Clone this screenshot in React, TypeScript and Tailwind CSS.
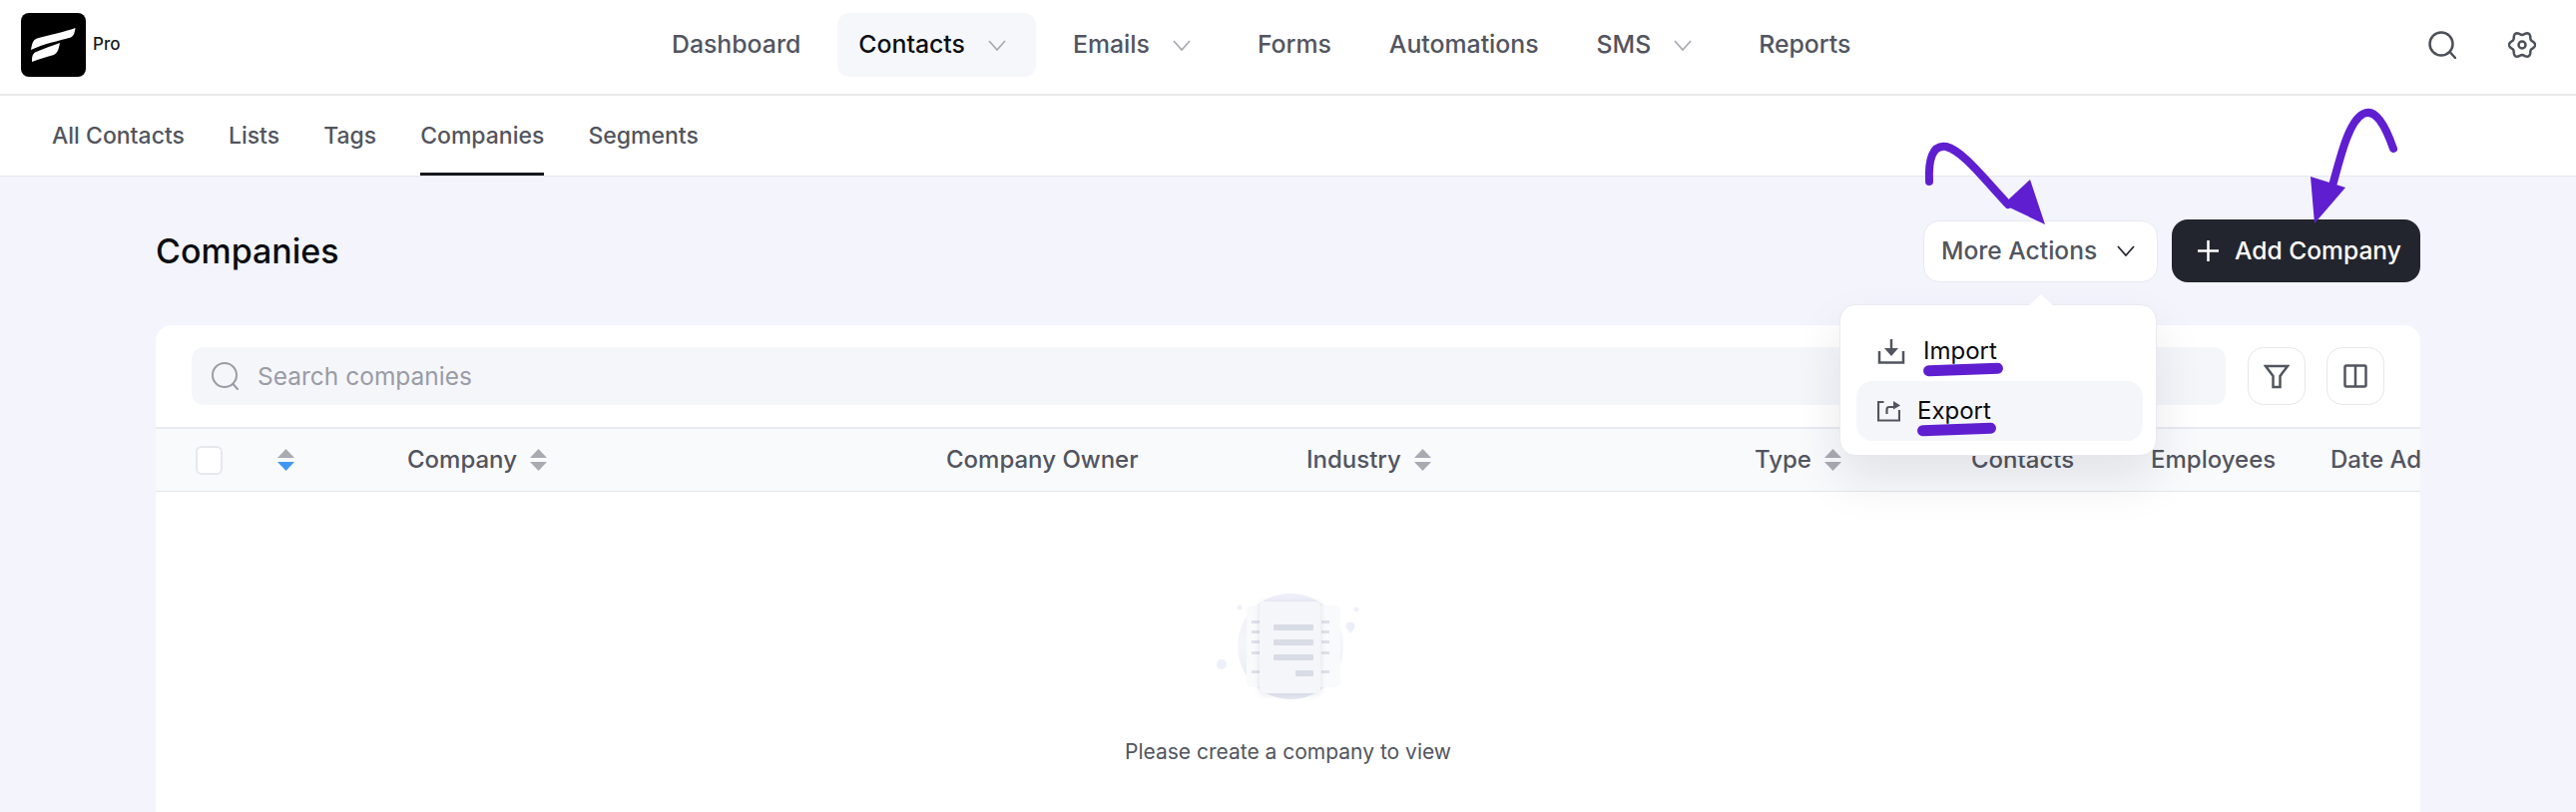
const font = { fontFamily: 'Inter, "Liberation Sans", sans-serif' };

// wavy six-lobed outline of the settings icon
const gearPath =
  Array.from({ length: 72 }, (_, i) => {
    const a = (i * 5 * Math.PI) / 180;
    const r = 11.6 + 1.5 * Math.cos(6 * a);
    return `${i === 0 ? 'M' : 'L'}${(14 + r * Math.cos(a)).toFixed(2)} ${(14 + r * Math.sin(a)).toFixed(2)}`;
  }).join('') + 'Z';

function Chevron({ className = '' }: { className?: string }) {
  return (
    <svg width="18" height="11" viewBox="0 0 18 11" fill="none" stroke="currentColor" strokeWidth="1.75" className={`shrink-0 ${className}`}>
      <path d="M1 1L9 10L17 1" />
    </svg>
  );
}

function SortArrows({ active = false }: { active?: boolean }) {
  return (
    <svg width="19" height="22" viewBox="0 0 19 22" className="shrink-0">
      <path d="M9.5 0L18 9H1Z" fill="#a9abb2" />
      <path d="M1 13H18L9.5 22Z" fill={active ? '#3f97f2' : '#a9abb2'} />
    </svg>
  );
}

function Logo() {
  return (
    <svg width="65" height="64" viewBox="0 0 65 64" className="shrink-0">
      <rect width="65" height="64" rx="8" fill="#000" />
      <path d="M10 37C11 31 12 27 16 25.5C28 22 44 19 54.5 15C54 19 53 23 50 24.500C38 28 22 31 10 37Z" fill="#fff" />
      <path d="M11 49C11 45 11 42 14 39.500C22 36 31 33 39 30C38 35 37 40 33 42C26 44 18 46 11 49Z" fill="#fff" />
    </svg>
  );
}

function NavItem({ label, active = false, menu = false }: { label: string; active?: boolean; menu?: boolean }) {
  return (
    <div
      className={`flex h-[64px] items-center pl-[21px] ${menu ? 'pr-[30px]' : 'pr-[21px]'} rounded-xl ${
        active ? 'bg-[#f6f7fb] text-[#0d0f14]' : 'text-[#52555f]'
      }`}
    >
      <span className="text-[24.8px] font-medium">{label}</span>
      {menu && <Chevron className="ml-[23px] text-[#a9abb2]" />}
    </div>
  );
}

function HeaderCell({ label, width, sort = false }: { label: string; width: string; sort?: boolean }) {
  return (
    <div className={`flex shrink-0 items-center gap-[12px] whitespace-nowrap ${width}`}>
      <span>{label}</span>
      {sort && <SortArrows />}
    </div>
  );
}

function Arrows() {
  return (
    <>
      <svg width="140" height="100" viewBox="0 0 140 100" className="absolute left-[1920px] top-[-42px] z-20" fill="none">
        <path d="M13 47C12 25 16 10 30 12C46 16 66 42 92 70" stroke="#5f1fd1" strokeWidth="8" strokeLinecap="round" />
        <path d="M129 90L114 45L87 70Z" fill="#5f1fd1" />
      </svg>
      <svg width="110" height="130" viewBox="0 0 110 130" className="absolute left-[2300px] top-[-75px] z-20" fill="none">
        <path d="M98 47C90 24 80 6 68 12C52 20 44 60 34 95" stroke="#5f1fd1" strokeWidth="8" strokeLinecap="round" />
        <path d="M19 122L15 75L50 86Z" fill="#5f1fd1" />
      </svg>
    </>
  );
}

function ActionsMenu() {
  return (
    <div className="absolute left-[1843px] top-[128px] z-10 h-[152px] w-[318px] rounded-2xl border border-[#e9eaef] bg-white pl-[16px] pt-[16px] shadow-[0_24px_48px_rgba(30,34,60,0.10)]">
      <div className="absolute left-[189px] top-[-11px] h-0 w-0 border-x-[12px] border-b-[11px] border-x-transparent border-b-white" />
      <div className="flex h-[60px] w-[287px] items-center pl-[21px] text-[24px] text-[#0b0c10]">
        <svg width="28" height="25" viewBox="0 0 28 25" fill="none" stroke="#52555f" strokeWidth="2.5" className="shrink-0">
          <path d="M2 12V23.500H26V12" />
          <path d="M14 0V10" />
          <path d="M7 9H21L14 17Z" fill="#52555f" stroke="none" />
        </svg>
        <div className="relative ml-[18px]">
          Import
          <div className="absolute left-0 top-[31px] h-[11px] w-[80px] -rotate-2 rounded-full bg-[#5f1fd1]" />
        </div>
      </div>
      <div className="flex h-[60px] w-[287px] items-center rounded-2xl bg-[#f5f6f9] pl-[21px] text-[24px] text-[#0b0c10]">
        <svg width="23" height="21" viewBox="0 0 23 21" fill="none" stroke="#52555f" strokeWidth="2.2" className="shrink-0">
          <path d="M6.500 1H1V19.500H22V9" />
          <path d="M9.500 13V8.500Q9.500 6 12 6H17" />
          <path d="M16 0L23 4.500L16 8.500Z" fill="#52555f" stroke="none" />
        </svg>
        <div className="relative ml-[17px]">
          Export
          <div className="absolute left-0 top-[31px] h-[11px] w-[79px] -rotate-2 rounded-full bg-[#5f1fd1]" />
        </div>
      </div>
    </div>
  );
}

function EmptyArt() {
  return (
    <svg width="160" height="120" viewBox="0 0 160 120">
      <defs>
        <linearGradient id="disc" x1="0" y1="0" x2="0" y2="1">
          <stop offset="0" stopColor="#eeeefa" />
          <stop offset="0.5" stopColor="#f5f6fa" />
          <stop offset="1" stopColor="#e4e7f1" />
        </linearGradient>
      </defs>
      <circle cx="82" cy="56" r="53" fill="url(#disc)" />
      <circle cx="13" cy="74" r="5" fill="#eef0f9" />
      <path d="M138 38a4.500 4.500 0 1 1 8 0l-4 5Z" fill="#eceef9" />
      <circle cx="31" cy="17" r="2.500" fill="#f0f1f7" />
      <circle cx="148" cy="19" r="2.500" fill="#f0f1f7" />
      <rect x="38" y="15" width="94" height="82" rx="5" fill="#f9fafc" />
      <g fill="#dde0e8">
        <rect x="43" y="30" width="8" height="3" />
        <rect x="43" y="40" width="8" height="3" />
        <rect x="43" y="50" width="8" height="3" />
        <rect x="43" y="61" width="8" height="3" />
        <rect x="43" y="80" width="8" height="3" />
        <rect x="113" y="30" width="8" height="3" />
        <rect x="113" y="40" width="8" height="3" />
        <rect x="113" y="50" width="8" height="3" />
        <rect x="113" y="61" width="8" height="3" />
        <rect x="113" y="80" width="8" height="3" />
      </g>
      <rect x="51" y="11" width="61" height="92" rx="4" fill="#f4f6fa" className="drop-shadow-[0_1px_3px_rgba(40,50,90,0.12)]" />
      <g fill="#d8dce5">
        <rect x="65" y="34" width="40" height="6" rx="1" />
        <rect x="65" y="49" width="40" height="6" rx="1" />
        <rect x="65" y="64" width="40" height="6" rx="1" />
        <rect x="87" y="80" width="18" height="6" rx="1" />
      </g>
    </svg>
  );
}

export default function App() {
  return (
    <div className="flex h-[814px] w-[2581px] flex-col overflow-hidden bg-[#f3f4fc]" style={font}>
      <header className="flex h-[96px] shrink-0 items-center border-b-2 border-[#e9e9ec] bg-white pb-[4px] pl-[21px] pr-[40px]">
        <div className="flex w-[631px] items-center gap-[7px]">
          <Logo />
          <span className="text-[17px] font-medium text-[#1a1b20]">Pro</span>
        </div>
        <nav className="flex items-center gap-[16px]">
          <NavItem label="Dashboard" />
          <NavItem label="Contacts" active menu />
          <NavItem label="Emails" menu />
          <NavItem label="Forms" />
          <NavItem label="Automations" />
          <NavItem label="SMS" menu />
          <NavItem label="Reports" />
        </nav>
        <div className="ml-auto flex items-center gap-[52px]">
          <svg width="28" height="28" viewBox="0 0 28 28" fill="none" stroke="#4d5059" strokeWidth="2.500">
            <circle cx="13" cy="13" r="11.500" />
            <path d="M21.500 21L27 27" strokeLinecap="round" />
          </svg>
          <svg width="28" height="28" viewBox="0 0 28 28" fill="none" stroke="#4d5059" strokeWidth="2.500" strokeLinejoin="round">
            <path d={gearPath} />
            <circle cx="14" cy="14" r="3.500" />
          </svg>
        </div>
      </header>

      <div className="flex h-[81px] shrink-0 gap-[44px] border-b border-[#e6e7eb] bg-white pl-[52px] text-[23px] font-medium text-[#52555f]">
        <span className="flex items-center">All Contacts</span>
        <span className="flex items-center">Lists</span>
        <span className="flex items-center">Tags</span>
        <span className="flex items-center border-b-[3px] border-[#17181d] pt-[3px]">Companies</span>
        <span className="flex items-center">Segments</span>
      </div>

      <main className="relative flex flex-1 flex-col px-[156px] pt-[43px]">
        <Arrows />
        <ActionsMenu />
        <div className="flex h-[63px] items-center justify-between">
          <h1 className="text-[34px] font-medium text-[#0b0c10]">Companies</h1>
          <div className="flex items-center gap-[14px]">
            <button className="flex h-[62px] w-[235px] items-center rounded-2xl border border-[#e9eaef] bg-white pl-[17px] text-[24.6px] font-medium text-[#52555f]">
              More Actions
              <Chevron className="ml-[20px] text-[#23252e]" />
            </button>
            <button className="flex h-[63px] w-[249px] items-center rounded-2xl bg-[#23252e] pl-[26px] text-[24.6px] font-medium text-white">
              <svg width="21" height="21" viewBox="0 0 21 21" stroke="currentColor" strokeWidth="2.500" className="mr-[16px] shrink-0">
                <path d="M10.500 0V21M0 10.500H21" />
              </svg>
              Add Company
            </button>
          </div>
        </div>

        <section className="mt-[43px] flex flex-1 flex-col overflow-hidden rounded-t-2xl bg-white">
          <div className="flex h-[104px] shrink-0 items-center border-b-2 border-[#e8ebf0] px-[36px]">
            <div className="flex h-[58px] flex-1 items-center rounded-xl bg-[#f5f6fa] pl-[20px] text-[24.5px] text-[#9a9ca5]">
              <svg width="28" height="28" viewBox="0 0 28 28" fill="none" stroke="#9a9ca5" strokeWidth="2" className="shrink-0">
                <circle cx="13" cy="13" r="12" />
                <path d="M21.500 22L26 27" strokeLinecap="round" />
              </svg>
              <span className="ml-[18px]">Search companies</span>
            </div>
            <button className="ml-[22px] flex h-[58px] w-[58px] items-center justify-center rounded-2xl border border-[#e6e7eb]">
              <svg width="26" height="25" viewBox="0 0 26 25" fill="none" stroke="#52555f" strokeWidth="2.500">
                <path d="M2 2H24L16.500 12V23H9.500V12Z" />
              </svg>
            </button>
            <button className="ml-[21px] flex h-[58px] w-[58px] items-center justify-center rounded-2xl border border-[#e6e7eb]">
              <svg width="24" height="24" viewBox="0 0 24 24" fill="none" stroke="#52555f" strokeWidth="2.500">
                <rect x="1.500" y="1.500" width="21" height="21" rx="1.500" />
                <path d="M12 1.500V22.500" />
              </svg>
            </button>
          </div>

          <div className="flex h-[63px] shrink-0 items-center overflow-hidden border-b border-[#e4e6eb] bg-[#f9fafc] pl-[40px] text-[24px] font-medium text-[#52555f]">
            <div className="w-[81px] shrink-0">
              <div className="h-[29px] w-[27px] rounded-md border-2 border-[#e6e8ec] bg-white" />
            </div>
            <div className="w-[131px] shrink-0">
              <SortArrows active />
            </div>
            <HeaderCell label="Company" width="w-[540px]" sort />
            <HeaderCell label="Company Owner" width="w-[361px]" />
            <HeaderCell label="Industry" width="w-[449px]" sort />
            <HeaderCell label="Type" width="w-[217px]" sort />
            <HeaderCell label="Contacts" width="w-[180px]" />
            <HeaderCell label="Employees" width="w-[180px]" />
            <HeaderCell label="Date Added" width="w-[180px]" />
          </div>

          <div className="flex flex-1 flex-col items-center pt-[99px]">
            <EmptyArt />
            <p className="mt-[26px] text-[21px] text-[#52555f]">Please create a company to view</p>
          </div>
        </section>
      </main>
    </div>
  );
}
